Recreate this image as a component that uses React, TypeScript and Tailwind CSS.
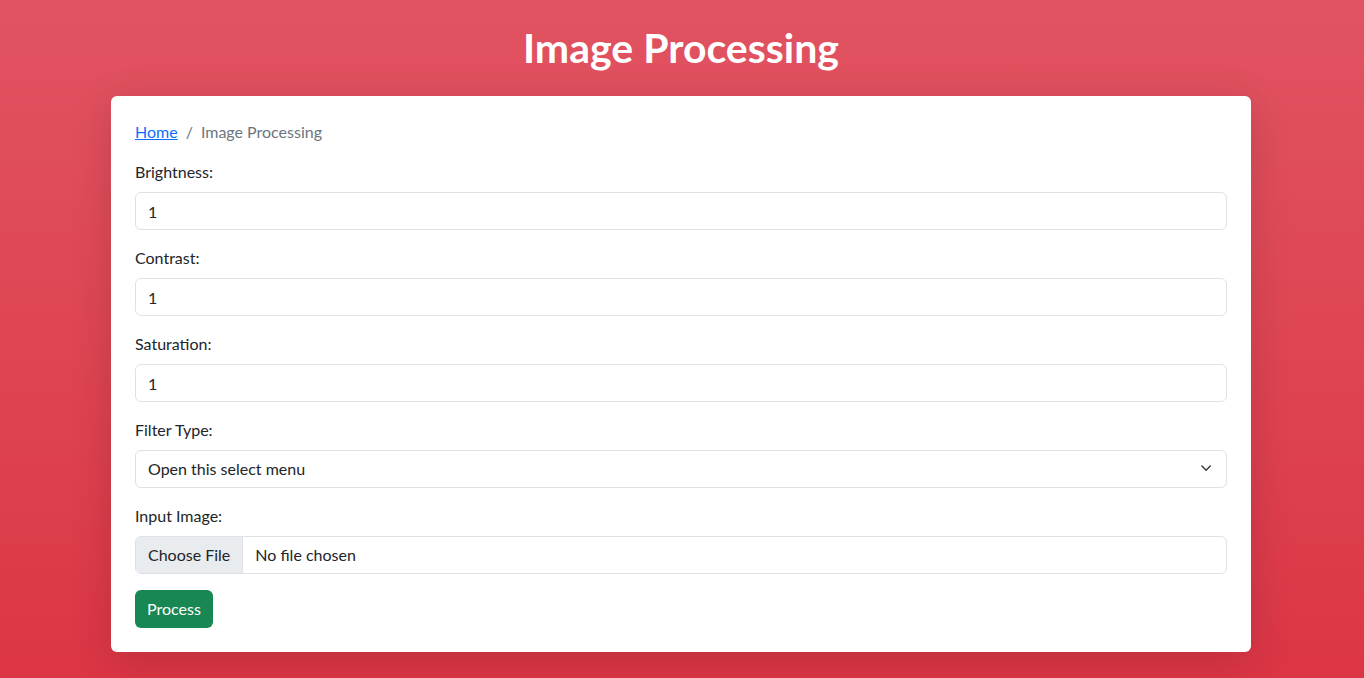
type FieldProps = {
  label: string;
  children: React.ReactNode;
};

function Field({ label, children }: FieldProps) {
  return (
    <div className="mb-4">
      <label className="mb-2 block leading-6 text-[#212529]">{label}</label>
      {children}
    </div>
  );
}

function NumberInput() {
  return (
    <input
      type="text"
      defaultValue="1"
      className="block h-[38px] w-full rounded-md border border-[#dee2e6] bg-white px-3 text-[#212529] outline-none"
    />
  );
}

export default function App() {
  return (
    <div
      className="min-h-[678px] w-full bg-gradient-to-b from-[#e15361] to-[#dc3545] text-base"
      style={{ fontFamily: '"Segoe UI", Lato, "Noto Sans", sans-serif' }}
    >
      <div className="w-[1362px] py-6">
        <h1 className="mb-6 text-center text-[41px] leading-[48px] font-bold text-white">Image Processing</h1>

        <div className="mx-auto w-[1140px] rounded-md bg-white p-6 shadow-[0_0.5rem_2.5rem_rgba(0,0,0,0.15)]">
          <nav className="mb-4 flex items-center leading-6">
            <a href="#" className="text-[#0d6efd] underline">
              Home
            </a>
            <span className="px-2 text-[#6c757d]">/</span>
            <span className="text-[#6c757d]">Image Processing</span>
          </nav>

          <Field label="Brightness:">
            <NumberInput />
          </Field>
          <Field label="Contrast:">
            <NumberInput />
          </Field>
          <Field label="Saturation:">
            <NumberInput />
          </Field>

          <Field label="Filter Type:">
            <div className="flex h-[38px] w-full items-center justify-between rounded-md border border-[#dee2e6] bg-white pr-3 pl-3 text-[#212529]">
              <span>Open this select menu</span>
              <svg width="16" height="12" viewBox="0 2 16 12" fill="none">
                <path d="m2 5 6 6 6-6" stroke="#343a40" strokeWidth="2" strokeLinecap="round" strokeLinejoin="round" transform="translate(2.5 1.6) scale(0.7)" />
              </svg>
            </div>
          </Field>

          <Field label="Input Image:">
            <div className="flex h-[38px] w-full overflow-hidden rounded-md border border-[#dee2e6] bg-white text-[#212529]">
              <span className="flex items-center border-r border-[#dee2e6] bg-[#e9ecef] px-3">Choose File</span>
              <span className="flex items-center px-3">No file chosen</span>
            </div>
          </Field>

          <button className="h-[38px] rounded-md bg-[#198754] px-3 text-white">Process</button>
        </div>
      </div>
    </div>
  );
}
